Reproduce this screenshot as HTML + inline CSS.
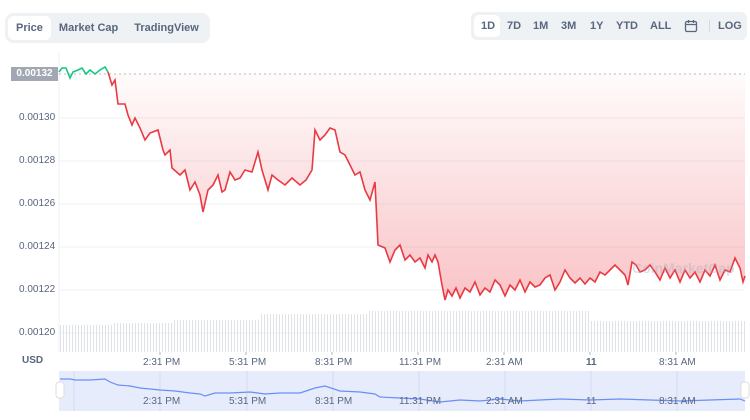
<!DOCTYPE html><html><head><style>
body{margin:0;width:750px;height:420px;background:#fff;font-family:"Liberation Sans",sans-serif;position:relative;overflow:hidden}
.tabs{position:absolute;left:5px;top:13px;height:30px;background:#eff2f5;border-radius:8px;display:flex;align-items:center;padding:0 3px;font-size:11px;font-weight:bold;color:#58667e}
.tabs div{padding:0 8px;height:24px;line-height:24px;border-radius:6px}
.tabs .a{background:#fff}
.rng{position:absolute;left:471px;top:12px;width:276px;height:28px;background:#eff2f5;border-radius:6px;font-size:11px;font-weight:bold;color:#58667e}
.rng span{position:absolute;top:8px}
.yl{position:absolute;left:19px;font-size:10px;color:#58667e}
.xl{position:absolute;font-size:10px;color:#58667e}
</style></head><body>
<div class="tabs"><div class="a">Price</div><div>Market Cap</div><div>TradingView</div></div>
<div class="rng"><div style="position:absolute;left:3px;top:3px;width:26px;height:22px;background:#fff;border-radius:5px"></div>
<span style="left:10px">1D</span><span style="left:36px">7D</span><span style="left:62px">1M</span><span style="left:90px">3M</span><span style="left:119px">1Y</span><span style="left:145px">YTD</span><span style="left:179px">ALL</span>
<svg style="position:absolute;left:213px;top:7px" width="14" height="14" viewBox="0 0 14 14"><rect x="1.5" y="2.5" width="11" height="10" rx="1.5" fill="none" stroke="#58667e" stroke-width="1.3"/><path d="M1.5 5.5h11M4.5 1v3M9.5 1v3" stroke="#58667e" stroke-width="1.3"/></svg>
<div style="position:absolute;left:238px;top:8px;width:1px;height:12px;background:#d5dae0"></div>
<span style="left:247px">LOG</span></div>
<svg style="position:absolute;left:0;top:0" width="750" height="420">
<defs><linearGradient id="g" gradientUnits="userSpaceOnUse" x1="0" y1="74" x2="0" y2="300"><stop offset="0" stop-color="#ea3943" stop-opacity=".02"/><stop offset="1" stop-color="#ea3943" stop-opacity=".3"/></linearGradient>
<pattern id="v" width="3" height="100" patternUnits="userSpaceOnUse"><rect width="1" height="100" fill="#dfe2e7"/></pattern></defs>
<line x1="59" y1="52" x2="59" y2="352" stroke="#eff2f5"/>
<g stroke="#eff2f5"><line x1="59" y1="118" x2="745" y2="118"/><line x1="59" y1="161" x2="745" y2="161"/><line x1="59" y1="204" x2="745" y2="204"/><line x1="59" y1="247" x2="745" y2="247"/><line x1="59" y1="290" x2="745" y2="290"/><line x1="59" y1="333" x2="745" y2="333"/></g>
<g fill="url(#v)"><rect x="59" y="325" width="55" height="27"/><rect x="114" y="323" width="60" height="29"/><rect x="174" y="320" width="85" height="32"/><rect x="259" y="314" width="110" height="38"/><rect x="369" y="311" width="220" height="41"/><rect x="589" y="321" width="156" height="31"/></g>
<path fill="url(#g)" d="M108,72 L112,85 115,80 118,104 125,104 128,115 132,125 135,118 140,128 145,140 150,133 158,130 163,150 165,155 170,150 172,168 180,175 185,170 190,190 195,182 200,195 203,212 208,190 213,185 218,175 222,192 225,190 230,172 235,180 240,178 245,170 252,172 258,152 262,170 268,190 272,175 278,180 285,185 292,178 300,185 306,180 312,170 315,130 320,140 325,135 330,128 335,130 340,152 345,155 350,165 355,175 360,172 365,190 370,200 375,182 378,245 385,248 390,262 395,250 400,245 405,260 410,255 415,262 420,258 425,268 428,255 432,262 435,255 438,262 442,285 445,300 448,290 452,296 456,288 460,298 465,288 470,292 475,282 480,295 485,288 490,292 495,280 500,285 505,296 510,285 515,290 520,280 525,292 530,282 535,287 540,285 545,278 550,275 555,290 560,282 565,270 570,278 575,283 580,278 585,284 590,278 595,282 600,272 605,275 610,270 615,265 620,270 625,275 628,285 632,262 636,265 640,272 645,270 650,265 655,272 660,280 665,268 670,278 675,270 680,282 685,270 690,278 695,272 700,282 705,270 710,276 715,265 720,280 725,270 730,272 735,258 740,268 743,282 745,276 L745,74 L108,74 Z"/>
<line x1="59" y1="74" x2="745" y2="74" stroke="#bbb" stroke-dasharray="2 3"/>
<polyline fill="none" stroke="#16c784" stroke-width="1.6" points="59,72 62,68 66,68 70,78 73,72 78,70 82,68 86,74 90,70 95,74 100,70 105,67 108,72"/>
<polyline fill="none" stroke="#ea3943" stroke-width="1.6" points="108,72 112,85 115,80 118,104 125,104 128,115 132,125 135,118 140,128 145,140 150,133 158,130 163,150 165,155 170,150 172,168 180,175 185,170 190,190 195,182 200,195 203,212 208,190 213,185 218,175 222,192 225,190 230,172 235,180 240,178 245,170 252,172 258,152 262,170 268,190 272,175 278,180 285,185 292,178 300,185 306,180 312,170 315,130 320,140 325,135 330,128 335,130 340,152 345,155 350,165 355,175 360,172 365,190 370,200 375,182 378,245 385,248 390,262 395,250 400,245 405,260 410,255 415,262 420,258 425,268 428,255 432,262 435,255 438,262 442,285 445,300 448,290 452,296 456,288 460,298 465,288 470,292 475,282 480,295 485,288 490,292 495,280 500,285 505,296 510,285 515,290 520,280 525,292 530,282 535,287 540,285 545,278 550,275 555,290 560,282 565,270 570,278 575,283 580,278 585,284 590,278 595,282 600,272 605,275 610,270 615,265 620,270 625,275 628,285 632,262 636,265 640,272 645,270 650,265 655,272 660,280 665,268 670,278 675,270 680,282 685,270 690,278 695,272 700,282 705,270 710,276 715,265 720,280 725,270 730,272 735,258 740,268 743,282 745,276"/>
<rect x="59" y="371" width="686" height="40" fill="#e7ecfc"/>
<g stroke="#d6ddf3"><line x1="74" y1="371" x2="74" y2="411"/><line x1="160" y1="371" x2="160" y2="411"/><line x1="247" y1="371" x2="247" y2="411"/><line x1="333" y1="371" x2="333" y2="411"/><line x1="419" y1="371" x2="419" y2="411"/><line x1="505" y1="371" x2="505" y2="411"/><line x1="591" y1="371" x2="591" y2="411"/><line x1="677" y1="371" x2="677" y2="411"/></g>
<polyline fill="none" stroke="#6b8ef5" stroke-width="1.2" points="60,379 70,379 75,380 90,380 105,379 110,382 118,385 130,386 140,388 160,390 175,391 190,393 200,394 205,396 215,393 230,393 250,392 265,394 280,393 300,393 315,388 325,386 340,391 360,392 375,394 380,397 400,398 420,399 440,402 460,400 480,401 500,399 520,401 540,400 560,399 590,400 620,399 650,400 680,401 710,400 740,399 745,401"/>
<rect x="56" y="382" width="8" height="16" rx="3" fill="#fff" stroke="#ddd"/>
<rect x="741" y="382" width="8" height="16" rx="3" fill="#fff" stroke="#ddd"/>
<g stroke="#b0b6c0"><line x1="160" y1="352" x2="160" y2="355"/><line x1="246" y1="352" x2="246" y2="355"/><line x1="332" y1="352" x2="332" y2="355"/><line x1="418" y1="352" x2="418" y2="355"/><line x1="504" y1="352" x2="504" y2="355"/><line x1="590" y1="352" x2="590" y2="355"/><line x1="676" y1="352" x2="676" y2="355"/></g>
</svg>
<div style="position:absolute;left:11px;top:67px;width:47px;height:14px;background:#a1a7b3;color:#fff;font-size:10px;font-weight:bold;line-height:14px;text-align:center">0.00132</div>
<div class="yl" style="top:112px">0.00130</div><div class="yl" style="top:155px">0.00128</div><div class="yl" style="top:198px">0.00126</div><div class="yl" style="top:241px">0.00124</div><div class="yl" style="top:284px">0.00122</div><div class="yl" style="top:327px">0.00120</div>
<div style="position:absolute;left:22px;top:355px;font-size:10px;font-weight:bold;color:#58667e">USD</div>
<div class="xl" style="left:143px;top:357px">2:31 PM</div><div class="xl" style="left:229px;top:357px">5:31 PM</div><div class="xl" style="left:315px;top:357px">8:31 PM</div><div class="xl" style="left:399px;top:357px">11:31 PM</div><div class="xl" style="left:486px;top:357px">2:31 AM</div><div class="xl" style="left:586px;top:357px;font-weight:bold">11</div><div class="xl" style="left:659px;top:357px">8:31 AM</div>
<div class="xl" style="left:143px;top:396px">2:31 PM</div><div class="xl" style="left:229px;top:396px">5:31 PM</div><div class="xl" style="left:315px;top:396px">8:31 PM</div><div class="xl" style="left:399px;top:396px">11:31 PM</div><div class="xl" style="left:486px;top:396px">2:31 AM</div><div class="xl" style="left:586px;top:396px">11</div><div class="xl" style="left:659px;top:396px">8:31 AM</div>
<div style="position:absolute;left:632px;top:260px;font-size:14px;color:rgba(160,170,190,.35);font-weight:bold">CoinMarketCap</div>
</body></html>
